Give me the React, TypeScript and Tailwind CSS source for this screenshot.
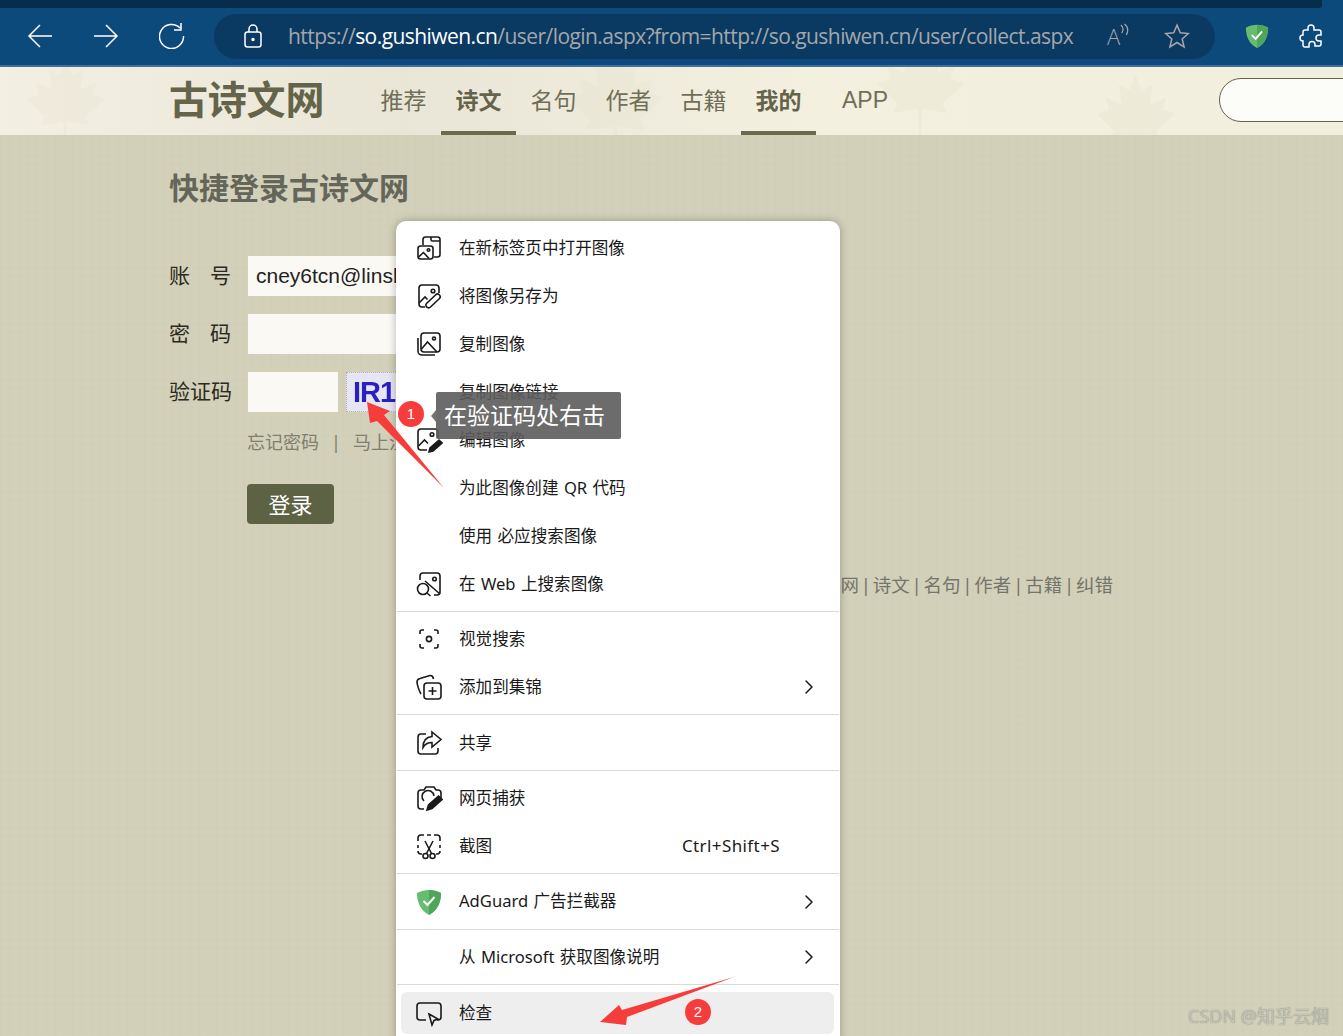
import { ChevronRight } from "lucide-react";
import type { ReactNode } from "react";

const cjk = "font-['Noto_Sans','Noto_Sans_CJK_SC',sans-serif]";

const ic = "w-[28px] h-[28px] fill-none stroke-[#1a1a1a] stroke-[1.6]";

const icons: Record<string, ReactNode> = {
  newTab: (
    <svg viewBox="0 0 28 28" className={ic}>
      <path d="M8 11V5.500A2.500 2.500 0 0 1 10.500 3h12A2.500 2.500 0 0 1 25 5.500v15a2.500 2.500 0 0 1-2.500 2.500H19M16 3v2.500a1.500 1.500 0 0 0 1.500 1.500H25" />
      <rect x="3" y="12" width="15" height="13" rx="2.500" />
      <circle cx="13.500" cy="16" r="1.300" />
      <path d="M3.500 23l5-4.500 5.500 6" />
    </svg>
  ),
  saveAs: (
    <svg viewBox="0 0 28 28" className={ic}>
      <path d="M10 25H7a3 3 0 0 1-3-3V6a3 3 0 0 1 3-3h14a3 3 0 0 1 3 3v5" />
      <circle cx="18" cy="9" r="1.800" />
      <path d="M4 21l6-6 2.500 2.500M12.500 25.500a2.500 2.500 0 0 1-1-4l9-8.500a2.500 2.500 0 0 1 4 3.500l-9 8.500a2.500 2.500 0 0 1-3 .500z" />
    </svg>
  ),
  copy: (
    <svg viewBox="0 0 28 28" className={ic}>
      <rect x="6" y="3" width="19" height="19" rx="3" />
      <circle cx="19" cy="8.500" r="1.500" />
      <path d="M6.500 19l6-7 9.500 10M3 8v13a4 4 0 0 0 4 4h13" />
    </svg>
  ),
  edit: (
    <svg viewBox="0 0 28 28" className={ic}>
      <path d="M12 24H6a3 3 0 0 1-3-3V6a3 3 0 0 1 3-3h14a3 3 0 0 1 3 3v6" />
      <circle cx="17" cy="8.500" r="1.800" />
      <path d="M3.500 20l6-6 3.500 3.500" />
      <path d="M14 26l1-4 9-8 3 3-9 8z" className="fill-[#1a1a1a]" />
    </svg>
  ),
  webSearch: (
    <svg viewBox="0 0 28 28" className={ic}>
      <path d="M5 10V6a3 3 0 0 1 3-3h14a3 3 0 0 1 3 3v16a3 3 0 0 1-3 3h-3" />
      <circle cx="19.500" cy="9" r="1.800" />
      <circle cx="8" cy="19" r="5.500" />
      <path d="M12 23l3.500 3M10 11l15 13" />
    </svg>
  ),
  visual: (
    <svg viewBox="0 0 28 28" className={ic}>
      <path d="M5 9V7a2 2 0 0 1 2-2h2M19 5h2a2 2 0 0 1 2 2v2M23 19v2a2 2 0 0 1-2 2h-2M9 23H7a2 2 0 0 1-2-2v-2" />
      <circle cx="14" cy="14" r="2.600" />
    </svg>
  ),
  collect: (
    <svg viewBox="0 0 28 28" className={ic}>
      <rect x="9" y="10" width="17" height="16" rx="3" />
      <path d="M17.500 14v8M13.500 18h8M6 21c-2-3-4-10-4-12s1-3 3-3.500l10-3c2-.3 3 .5 3.500 3.500" />
    </svg>
  ),
  share: (
    <svg viewBox="0 0 28 28" className={ic}>
      <path d="M11 5H6a3 3 0 0 0-3 3v14a3 3 0 0 0 3 3h14a3 3 0 0 0 3-3v-3" />
      <path d="M17 3l9 7.500-9 7.500v-4.500c-4 0-7 1.500-9 5 0-6 3-10.500 9-11z" />
    </svg>
  ),
  capture: (
    <svg viewBox="0 0 28 28" className={ic}>
      <path d="M9 25H6a3 3 0 0 1-3-3V9a3 3 0 0 1 3-3h3l2-3h8l2 3h2a3 3 0 0 1 3 3v5" />
      <path d="M9 17a6 6 0 1 1 10-5" />
      <path d="M12 26l1.500-5 10-9 3.500 3.500-10 9z" className="fill-[#1a1a1a]" />
    </svg>
  ),
  snip: (
    <svg viewBox="0 0 28 28" className={ic}>
      <path d="M9 3H6a3 3 0 0 0-3 3v3M3 13v3M3 19a3 3 0 0 0 3 3h1M12 3h4M19 3h3a3 3 0 0 1 3 3v3M25 13v3M25 19a3 3 0 0 1-3 3h-1" />
      <circle cx="10.500" cy="24" r="2.500" />
      <circle cx="17.500" cy="24" r="2.500" />
      <path d="M11.500 21.500L18 9M16.500 21.500L10 9" />
    </svg>
  ),
  inspect: (
    <svg viewBox="0 0 28 28" className={ic}>
      <path d="M11 21H5a3 3 0 0 1-3-3V7a3 3 0 0 1 3-3h18a3 3 0 0 1 3 3v11a3 3 0 0 1-3 3h-1" />
      <path d="M14 15l9 5-4 1.500-2 4.500z" />
    </svg>
  ),
};

function Shield({ className }: { className: string }) {
  return (
    <svg viewBox="0 0 28 28" className={className}>
      <path d="M14 2c4 0 8 1 12 3 0 9-3 17-12 22C5 22 2 14 2 5c4-2 8-3 12-3z" fill="#68bc71" />
      <path d="M14 2c4 0 8 1 12 3 0 9-3 17-12 22z" fill="#4fa65a" />
      <path d="M8.500 13l4 4 7-8" fill="none" stroke="#fff" strokeWidth="2" />
    </svg>
  );
}

function Leaf({ className }: { className: string }) {
  return (
    <svg viewBox="0 0 100 100" className={className}>
      <path d="M50 2l8 18 12-6-3 22 18-8-4 14 14 4-22 20 4 10-25-4-1 26h-2l-1-26-25 4 4-10L7 46l14-4-4-14 18 8-3-22 12 6z" fill="#e6dfc8" />
    </svg>
  );
}

function Item({ icon, label, arrow, hint, h = "h-[48px]" }: { icon?: ReactNode; label: string; arrow?: boolean; hint?: string; h?: string }) {
  return (
    <div className={`flex items-center pl-[19px] pr-[22px] ${h}`}>
      <span className="w-[44px] flex items-center shrink-0">{icon}</span>
      <span className="text-[16.6px] text-[#1a1a1a] whitespace-nowrap [word-spacing:1px]">{label}</span>
      {hint && <span className="ml-auto mr-[38px] text-[17px] text-[#1a1a1a] tracking-[0.4px]">{hint}</span>}
      {arrow && <ChevronRight className="ml-auto w-[24px] h-[24px] text-[#1a1a1a] -mr-[3px]" strokeWidth={1.500} />}
    </div>
  );
}

const Divider = () => <div className="h-[1px] bg-[#d9d9d9] ml-[1px] mr-[1px] shrink-0" />;

function ContextMenu() {
  return (
    <div className={`absolute left-[396px] top-[221px] w-[444px] h-[830px] bg-white rounded-[10px] shadow-[0_0_8px_rgba(0,0,0,0.28)] pt-[3px] overflow-hidden ${cjk}`}>
      <Item icon={icons.newTab} label="在新标签页中打开图像" />
      <Item icon={icons.saveAs} label="将图像另存为" />
      <Item icon={icons.copy} label="复制图像" />
      <Item label="复制图像链接" />
      <Item icon={icons.edit} label="编辑图像" />
      <Item label="为此图像创建 QR 代码" />
      <Item label="使用 必应搜索图像" />
      <Item icon={icons.webSearch} label="在 Web 上搜索图像" />
      <div className="h-[3px]" />
      <Divider />
      <div className="h-[3px]" />
      <Item icon={icons.visual} label="视觉搜索" />
      <Item icon={icons.collect} label="添加到集锦" arrow />
      <div className="h-[3px]" />
      <Divider />
      <div className="pt-[1px]">
        <Item icon={icons.share} label="共享" h="h-[54px]" />
      </div>
      <Divider />
      <div className="h-[3px]" />
      <Item icon={icons.capture} label="网页捕获" />
      <Item icon={icons.snip} label="截图" hint="Ctrl+Shift+S" />
      <div className="h-[3px]" />
      <Divider />
      <Item icon={<Shield className="w-[28px] h-[28px]" />} label="AdGuard 广告拦截器" arrow h="h-[55px]" />
      <Divider />
      <Item label="从 Microsoft 获取图像说明" arrow h="h-[54px]" />
      <Divider />
      <div className="mt-[7px] mx-[5px] w-[433px] h-[42px] rounded-[6px] bg-[#eeeeee] flex items-center pl-[14px]">
        <span className="w-[44px] flex items-center shrink-0">{icons.inspect}</span>
        <span className="text-[16.6px] text-[#1a1a1a]">检查</span>
      </div>
    </div>
  );
}

function Annotations() {
  return (
    <>
      <svg viewBox="0 0 1343 1036" className="absolute left-0 top-0 w-[1343px] h-[1036px] pointer-events-none">
        <path d="M367 402L390 411 384 415 444 488 377 421 370 423z" fill="#f73c3c" />
        <path d="M600 1022L619 1005 622 1010 734 977 627 1017 626 1025z" fill="#f73c3c" />
      </svg>
      <div className="absolute left-[398px] top-[401px] w-[26px] h-[26px] rounded-full bg-[#f73c3c] text-white text-[15px] flex items-center justify-center font-['Liberation_Sans',sans-serif]">1</div>
      <div className="absolute left-[685px] top-[999px] w-[26px] h-[26px] rounded-full bg-[#f73c3c] text-white text-[15px] flex items-center justify-center font-['Liberation_Sans',sans-serif]">2</div>
      <div className="absolute left-[431px] top-[410px] w-0 h-0 border-y-[6px] border-y-transparent border-r-[5px] border-r-[#666666]/90" />
      <div className={`absolute left-[436px] top-[392px] w-[185px] h-[47px] rounded-[2px] bg-[#5c5c5c]/90 text-white text-[23px] pl-[8px] leading-[47px] whitespace-nowrap ${cjk}`}>在验证码处右击</div>
      <div className={`absolute right-[14px] bottom-[6px] text-[18px] text-[#c4c4bb] [text-shadow:0_0_1px_#77776c] ${cjk}`}>CSDN @知乎云烟</div>
    </>
  );
}

function BrowserBar() {
  const stroke = "fill-none stroke-white stroke-[1.5]";
  return (
    <div className="h-[67px] bg-[#0b4a7a] border-b-[2px] border-[#41709a] relative shrink-0">
      <div className="absolute left-0 top-0 w-[1322px] h-[8px] bg-[#082c4c] rounded-br-[3px]" />
      <div className="flex items-center h-[65px] pt-[7px]">
        <svg viewBox="0 0 26 26" className={`ml-[27px] w-[26px] h-[26px] ${stroke}`}><path d="M25 13H2M13 2L2 13l11 11" /></svg>
        <svg viewBox="0 0 26 26" className={`ml-[40px] w-[26px] h-[26px] ${stroke}`}><path d="M1 13h23M13 2l11 11-11 11" /></svg>
        <svg viewBox="0 0 26 26" className={`ml-[40px] w-[26px] h-[26px] ${stroke}`}><path d="M21 5a12 12 0 1 0 3.500 8M22 0v7h-7" /></svg>
        <div className={`ml-[29px] w-[1001px] h-[45px] rounded-full bg-[#0a3a62] flex items-center pl-[29px] ${cjk}`}>
          <svg viewBox="0 0 20 24" className={`w-[20px] h-[24px] ${stroke}`}><rect x="2" y="8" width="16" height="15" rx="2.500" /><path d="M6 8V5a4 4 0 0 1 8 0v3" /><circle cx="10" cy="15.500" r="1" className="fill-white" /></svg>
          <div className="ml-[25px] w-[786px] pt-[2px] text-[21px] tracking-[-0.56px] text-[#a4a7aa] whitespace-nowrap font-['Open_Sans',sans-serif]">
            https://<span className="text-white">so.gushiwen.cn</span>/user/login.aspx?from=http://so.gushiwen.cn/user/collect.aspx
          </div>
          <span className="ml-[33px] text-[22px] text-[#a4a7aa] font-light font-['Open_Sans',sans-serif] leading-none relative">
            A
            <svg viewBox="0 0 12 14" className="absolute -right-[10px] -top-[2px] w-[11px] h-[13px] fill-none stroke-[#a4a7aa] stroke-[1.3]"><path d="M2 2c3 2 3 6 1 9M6 1c4 3 4 8 2 12" /></svg>
          </span>
          <svg viewBox="0 0 24 24" className="ml-[44px] w-[26px] h-[26px] fill-none stroke-[#a4a7aa] stroke-[1.400]"><path d="M12 2l3 7 7.500.7-5.700 5 1.700 7.300L12 18l-6.500 4 1.700-7.300-5.700-5L9 9z" /></svg>
        </div>
        <Shield className="ml-[29px] w-[26px] h-[26px]" />
        <svg viewBox="0 0 26 26" className={`ml-[28px] w-[26px] h-[26px] ${stroke}`}><path d="M10 5a3 3 0 0 1 6 0v2h5a2 2 0 0 1 2 2v3h-2a3 3 0 0 0 0 6h2v3a2 2 0 0 1-2 2h-4v-1.500a3 3 0 0 0-6 0V24H7a2 2 0 0 1-2-2v-4a3 3 0 0 1 0-6V9a2 2 0 0 1 2-2h3z" /></svg>
      </div>
    </div>
  );
}

function SiteHeader() {
  const nav = [
    { t: "推荐" }, { t: "诗文", on: true }, { t: "名句" }, { t: "作者" }, { t: "古籍" }, { t: "我的", on: true }, { t: "APP" },
  ];
  return (
    <div className="h-[68px] shrink-0 bg-[linear-gradient(90deg,#f3efe2_0%,#e9e6d8_30%,#f3f0e0_60%,#f2efdf_100%)] flex items-stretch pl-[170px] relative overflow-hidden">
      <Leaf className="absolute left-[20px] top-[-10px] w-[90px] h-[90px] opacity-20" />
      <Leaf className="absolute left-[560px] top-[-20px] w-[110px] h-[110px] opacity-20" />
      <Leaf className="absolute left-[870px] top-[-30px] w-[100px] h-[100px] opacity-25" />
      <Leaf className="absolute left-[1090px] top-[5px] w-[90px] h-[90px] opacity-25" />
      <div className="relative -ml-[1px] text-[39px] font-bold text-[#64644a] w-[197px] leading-[66px] -mt-[1px] tracking-[-0.2px]">古诗文网</div>
      {nav.map((n) => (
        <div
          key={n.t}
          className={`relative text-[23px] leading-[66px] ${n.t === "APP" ? "w-[85px] pl-[26px] text-left font-['Liberation_Sans',sans-serif]" : "w-[75px] text-center"} ${n.on ? "font-bold text-[#64644a] border-b-[4px] border-[#6a6a4c] h-[68px]" : "text-[#6f6f58]"}`}
        >
          {n.t}
        </div>
      ))}
      <div className="relative ml-auto -mr-[40px] mt-[11px] w-[164px] h-[44px] rounded-full border border-[#64644a] bg-white/80" />
    </div>
  );
}

function LoginForm() {
  const label = "w-[62px] text-[21px] text-[#2a2a1e] flex justify-between mr-[16px]";
  const input = "h-[40px] bg-[#fbf9f4]";
  return (
    <div className="pl-[169px] pt-[33px] relative">
      <div className="text-[30px] font-bold text-[#65665a] leading-[40px]">快捷登录古诗文网</div>
      <div className="mt-[39px] flex items-center h-[58px]">
        <div className={label}><span>账</span><span>号</span></div>
        <div className={`${input} w-[240px] ml-[1px] pl-[8px] text-[21px] leading-[40px] text-[#222] font-['Liberation_Sans',sans-serif] whitespace-nowrap overflow-hidden`}>cney6tcn@linsl</div>
      </div>
      <div className="flex items-center h-[58px]">
        <div className={label}><span>密</span><span>码</span></div>
        <div className={`${input} w-[240px] ml-[1px]`} />
      </div>
      <div className="flex items-center h-[58px]">
        <div className={label}><span>验</span><span>证</span><span>码</span></div>
        <div className={`${input} w-[90px] ml-[1px]`} />
        <div className="ml-[8px] w-[60px] h-[40px] bg-[#e6e6f2] border border-dotted border-[#b9a9c4] flex items-center pl-[6px] text-[29px] font-bold text-[#2a1fc0] font-['Liberation_Sans',sans-serif] overflow-hidden leading-none tracking-[-1px]">
          <span className="blur-[0.6px]">IR1</span>
        </div>
      </div>
      <div className="ml-[78px] -mt-[1px] h-[44px] flex items-center text-[18px] text-[#7e7f6c] whitespace-nowrap">
        忘记密码<span className="mx-[12px]">|</span>马上注册
      </div>
      <div className="ml-[78px] mt-[20px] w-[87px] h-[40px] rounded-[4px] bg-[#5e6245] text-white text-[22px] flex items-center justify-center">登录</div>
      <div className="mt-[46px] pr-[230px] flex justify-end text-[18.500px] text-[#74756a] leading-[30px] whitespace-nowrap [word-spacing:-3px]">
        古诗文网 | 诗文 | 名句 | 作者 | 古籍 | 纠错
      </div>
    </div>
  );
}

export default function App() {
  return (
    <div className={`relative w-[1343px] h-[1036px] overflow-hidden flex flex-col bg-[#d2d0b9] ${cjk}`}>
      <BrowserBar />
      <SiteHeader />
      <div className="grow bg-[repeating-linear-gradient(0deg,rgba(255,255,255,0.02)_0_2px,transparent_2px_7px),repeating-linear-gradient(90deg,rgba(120,120,90,0.015)_0_2px,transparent_2px_9px)]">
        <LoginForm />
      </div>
      <ContextMenu />
      <Annotations />
    </div>
  );
}
